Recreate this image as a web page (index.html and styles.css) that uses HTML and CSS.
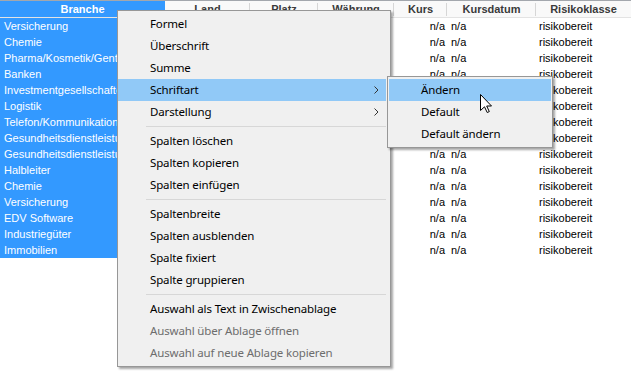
FILE: index.html
```html
<!DOCTYPE html>
<html>
<head>
  <title>Tabelle Kontextmenü</title>
  <link rel="stylesheet" href="styles.css">
</head>
<body>
  <div id="screen">
    <div class="grid">
      <div class="head">
        <div class="hcell branche">Branche</div>
        <div class="hcell">Land</div>
        <div class="hcell">Platz</div>
        <div class="hcell">Währung</div>
        <div class="hcell">Kurs</div>
        <div class="hcell">Kursdatum</div>
        <div class="hcell last">Risikoklasse</div>
      </div>
      <div id="rows"></div>
    </div>

    <div class="menu main-menu">
      <div class="item">Formel</div>
      <div class="item">Überschrift</div>
      <div class="item">Summe</div>
      <div class="item active">Schriftart<span class="arrow"><svg width="5" height="8" viewBox="0 0 5 8"><polyline points="0.5,0.5 4,4 0.5,7.5" fill="none" stroke="#333" stroke-width="1"/></svg></span></div>
      <div class="item">Darstellung<span class="arrow"><svg width="5" height="8" viewBox="0 0 5 8"><polyline points="0.5,0.5 4,4 0.5,7.5" fill="none" stroke="#333" stroke-width="1"/></svg></span></div>
      <div class="sep"></div>
      <div class="item">Spalten löschen</div>
      <div class="item">Spalten kopieren</div>
      <div class="item">Spalten einfügen</div>
      <div class="sep"></div>
      <div class="item">Spaltenbreite</div>
      <div class="item">Spalten ausblenden</div>
      <div class="item">Spalte fixiert</div>
      <div class="item">Spalte gruppieren</div>
      <div class="sep"></div>
      <div class="item">Auswahl als Text in Zwischenablage</div>
      <div class="item disabled">Auswahl über Ablage öffnen</div>
      <div class="item disabled">Auswahl auf neue Ablage kopieren</div>
    </div>

    <div class="menu sub-menu">
      <div class="item active">Ändern</div>
      <div class="item">Default</div>
      <div class="item">Default ändern</div>
    </div>

    <svg class="cursor" width="13" height="20" viewBox="0 0 13 20">
      <path d="M0.5 0.5 L0.5 16.5 L4.5 12.8 L7.2 18.5 L9.3 17.6 L6.7 12 L11.5 12 Z" fill="#fff" stroke="#000" stroke-width="1" stroke-linejoin="miter"/>
    </svg>
  </div>

  <script>
    // Branchen der Liste, Rest der Zeile ist immer gleich
    const branchen = [
      'Versicherung', 'Chemie', 'Pharma/Kosmetik/Gentechnik', 'Banken',
      'Investmentgesellschaften', 'Logistik', 'Telefon/Kommunikation',
      'Gesundheitsdienstleistungen', 'Gesundheitsdienstleistungen', 'Halbleiter',
      'Chemie', 'Versicherung', 'EDV Software', 'Industriegüter', 'Immobilien'
    ];

    const rows = document.getElementById('rows');
    branchen.forEach(name => {
      const row = document.createElement('div');
      row.className = 'row';
      row.innerHTML =
        `<div class="cell branche">${name}</div>` +
        '<div class="cell"></div><div class="cell"></div><div class="cell"></div>' +
        '<div class="cell kurs">n/a</div>' +
        '<div class="cell datum">n/a</div>' +
        '<div class="cell risiko">risikobereit</div>';
      rows.appendChild(row);
    });
  </script>
</body>
</html>
```

FILE: styles.css
```css
body {
  margin: 0;
  background: #fff;
}

#screen {
  position: relative;
  width: 631px;
  height: 372px;
  overflow: hidden;
  font-family: "Liberation Sans", Arial, sans-serif;
  font-size: 11px;
}

.head,
.row {
  display: grid;
  grid-template-columns: 165px 85px 68px 76px 53px 89px 1fr;
}

.head {
  height: 16px;
  border-top: 1px solid #a3a7ad;
  border-bottom: 1px solid #e3e3e3;
  background: #f9f9f9;
}

.hcell {
  line-height: 16px;
  text-align: center;
  font-weight: bold;
  color: #3a3a3a;
  white-space: nowrap;
  overflow: hidden;
  position: relative;
}

.hcell::after {
  content: "";
  position: absolute;
  right: 0;
  top: 2px;
  bottom: 1px;
  width: 1px;
  background: #d6d6d6;
}

.hcell.last::after,
.hcell.branche::after {
  display: none;
}

.hcell.branche {
  background: #3399ff;
  color: #fff;
}

.row {
  height: 16px;
  line-height: 16px;
}

.cell {
  white-space: nowrap;
  overflow: hidden;
  color: #000;
}

.cell.branche {
  background: #3399ff;
  color: #fff;
  padding-left: 4px;
}

.cell.kurs {
  text-align: right;
  padding-right: 2px;
}

.cell.datum {
  padding-left: 4px;
}

.cell.risiko {
  padding-left: 3px;
}

/* Kontextmenüs */
.menu {
  position: absolute;
  background: #f0f0f0;
  border: 1px solid #979797;
  box-shadow: 2px 2px 2px rgba(0, 0, 0, 0.35);
  font-family: "Noto Sans", "Open Sans", sans-serif;
  font-size: 11.5px;
  letter-spacing: -0.15px;
  color: #000;
}

.main-menu {
  left: 117px;
  top: 10px;
  width: 268px;
  padding: 2px 4px 2px 0;
}

.sub-menu {
  left: 387px;
  top: 76px;
  width: 162px;
  padding: 2px 1px;
}

.item {
  position: relative;
  height: 22px;
  line-height: 22px;
  padding-left: 32px;
  white-space: nowrap;
}

.item.active {
  background: #91c9f7;
}

.item.disabled {
  color: #6d6d6d;
}

.arrow {
  position: absolute;
  right: 7px;
  top: 7px;
  height: 8px;
}

.arrow svg {
  display: block;
}

.sep {
  height: 7px;
  margin-left: 28px;
  display: flex;
  align-items: center;
}

.sep::before {
  content: "";
  flex: 1;
  height: 1px;
  background: #d7d7d7;
}

.cursor {
  position: absolute;
  left: 480px;
  top: 94px;
}
```
